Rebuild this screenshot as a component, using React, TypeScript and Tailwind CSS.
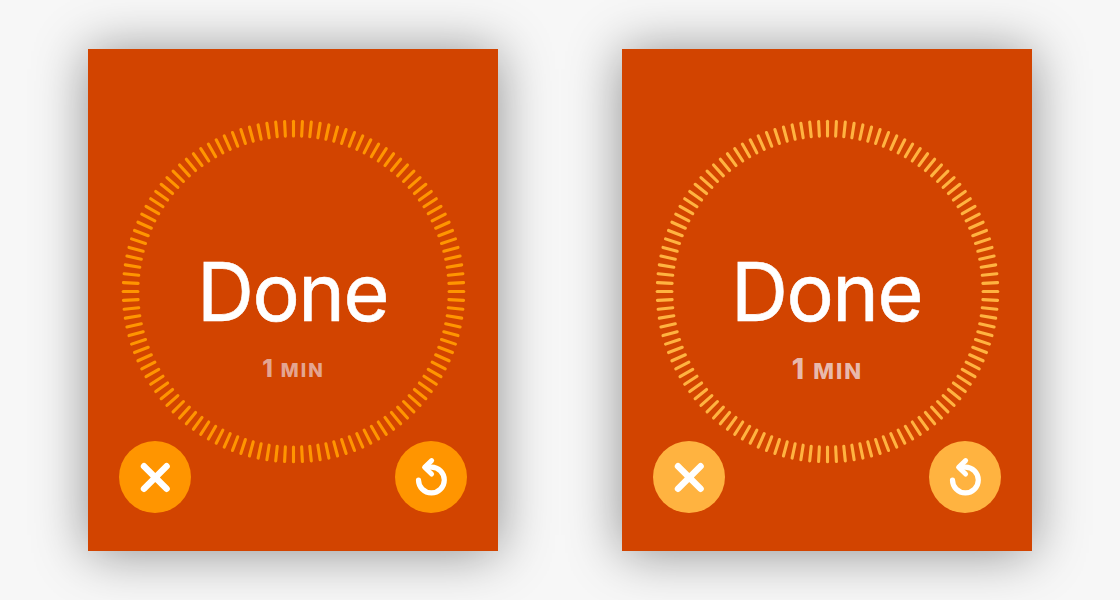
type Theme = {
  name: string;
  ticks: string;
  button: string;
  caption: string;
  digit: string;
  unit: string;
};

const themes: Theme[] = [
  {
    name: "standard",
    ticks: "text-[#ff9500]",
    button: "bg-[#ff9500]",
    caption: "text-[#e4a591] h-[24px] gap-[8px] mt-[17px]",
    digit: "text-[24px]",
    unit: "text-[19px] tracking-[2px]",
  },
  {
    name: "contrast",
    ticks: "text-[#ffb340]",
    button: "bg-[#ffb340]",
    caption: "text-[#e8b9ac] h-[28px] gap-[9px] mt-[15px]",
    digit: "text-[28px]",
    unit: "text-[22px] tracking-[2px]",
  },
];

const TICK_COUNT = 120;

function Dial() {
  return (
    <svg className="h-full w-full" viewBox="-172.5 -172.5 345 345" fill="none">
      {Array.from({ length: TICK_COUNT }, (_, i) => (
        <line
          key={i}
          x1="0"
          y1="-155.6"
          x2="0"
          y2="-170.3"
          stroke="currentColor"
          strokeWidth="3.1"
          strokeLinecap="round"
          transform={`rotate(${(i * 360) / TICK_COUNT})`}
        />
      ))}
    </svg>
  );
}

function CloseIcon() {
  return (
    <svg className="size-[72px]" viewBox="0 0 72 72" fill="none">
      <path
        d="M25 25.2 47.6 47.8M47.6 25.2 25 47.8"
        stroke="white"
        strokeWidth="6.4"
        strokeLinecap="round"
      />
    </svg>
  );
}

function RepeatIcon() {
  return (
    <svg className="size-[72px]" viewBox="0 0 72 72" fill="none">
      <path
        d="M23.5 39A12.9 12.9 0 1 0 36.4 26.1H31"
        stroke="white"
        strokeWidth="5.2"
        strokeLinecap="round"
      />
      <path
        d="M36.6 19.6 29.6 26.3 36.6 33"
        stroke="white"
        strokeWidth="5"
        strokeLinecap="round"
        strokeLinejoin="round"
      />
    </svg>
  );
}

function TimerScreen({ theme }: { theme: Theme }) {
  return (
    <section className="relative h-[502px] w-[410px] bg-[#d24400] pt-[70px] shadow-[0_2px_50px_rgba(0,0,0,0.42)]">
      <div className="ml-[33px] grid h-[345px] w-[345px] place-items-center">
        <div className={`col-start-1 row-start-1 h-full w-full ${theme.ticks}`}>
          <Dial />
        </div>
        <div className="col-start-1 row-start-1 flex h-full flex-col items-center pt-[124px] font-['Inter',sans-serif]">
          <h1 className="h-[97px] scale-x-[0.98] pr-[2px] text-[80.5px] leading-[97px] tracking-[-1.5px] text-white [-webkit-text-stroke:0.6px_white]">
            Done
          </h1>
          <p className={`flex items-baseline font-extrabold leading-none ${theme.caption}`}>
            <span className={theme.digit}>1</span>
            <span className={theme.unit}>MIN</span>
          </p>
        </div>
      </div>
      {/* the buttons overlap the lower edge of the dial */}
      <div className="absolute inset-x-[31px] bottom-[38px] flex justify-between">
        <button aria-label="Close" className={`size-[72px] rounded-full ${theme.button}`}>
          <CloseIcon />
        </button>
        <button aria-label="Repeat" className={`size-[72px] rounded-full ${theme.button}`}>
          <RepeatIcon />
        </button>
      </div>
    </section>
  );
}

export default function App() {
  return (
    <main className="flex h-[600px] w-[1120px] gap-[124px] overflow-hidden bg-[#f7f7f7] pl-[88px] pt-[49px]">
      {themes.map((theme) => (
        <TimerScreen key={theme.name} theme={theme} />
      ))}
    </main>
  );
}
